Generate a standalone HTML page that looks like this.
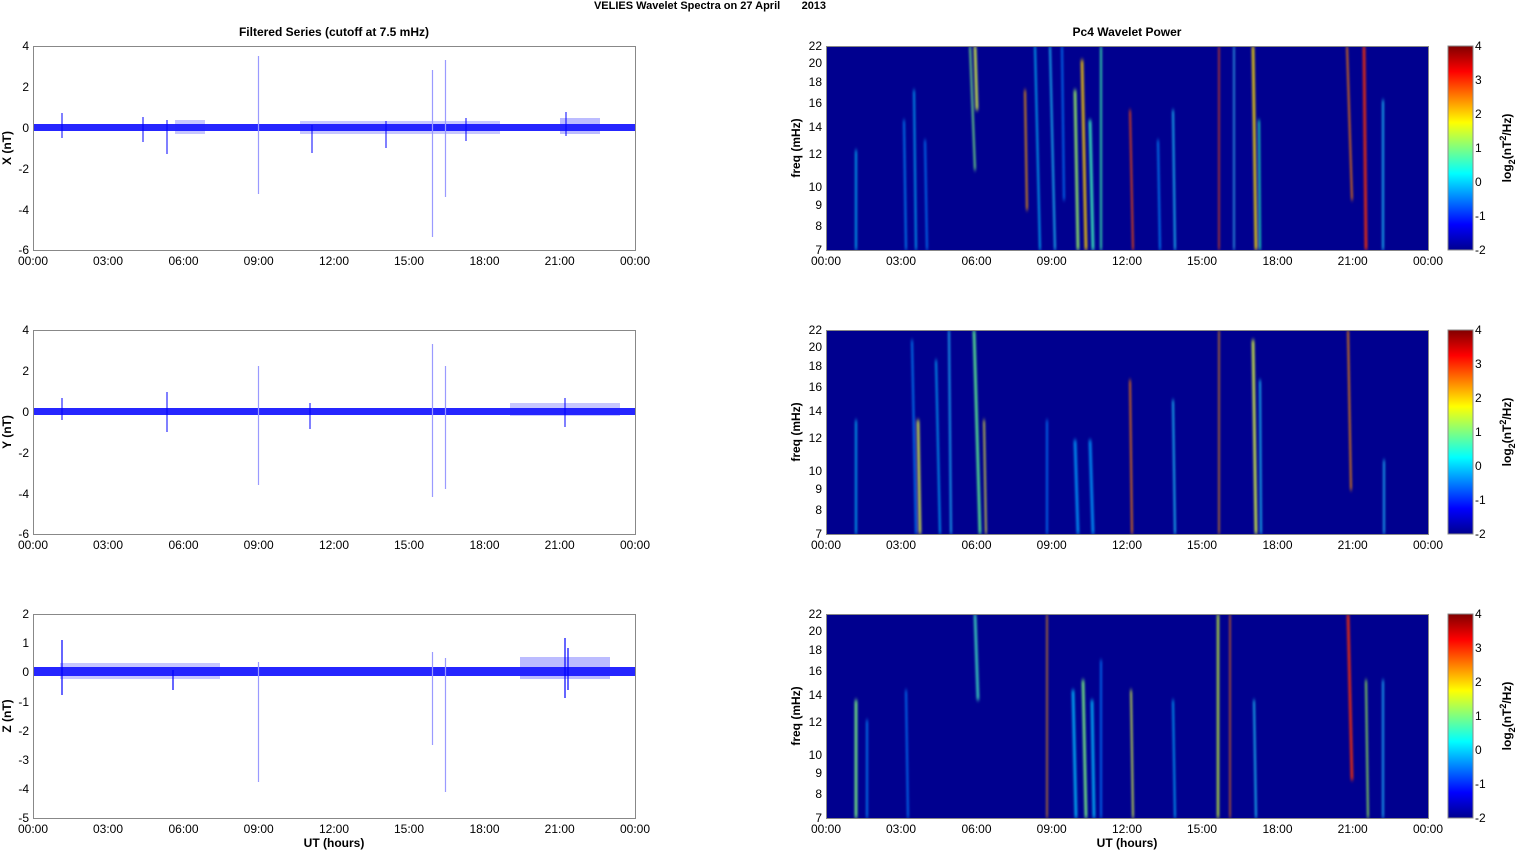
<!DOCTYPE html>
<html><head><meta charset="utf-8"><style>
html,body{margin:0;padding:0;background:#fff;}
svg{display:block;font-family:"Liberation Sans",Arial,sans-serif;}
.t{font-size:12px;fill:#000}
.b{font-size:12px;font-weight:bold;fill:#000}
</style></head><body>
<svg width="1515" height="851" viewBox="0 0 1515 851" xmlns="http://www.w3.org/2000/svg">
<defs>
<linearGradient id="jet" x1="0" y1="1" x2="0" y2="0">
<stop offset="0" stop-color="#00008f"/><stop offset="0.125" stop-color="#0000ff"/>
<stop offset="0.375" stop-color="#00ffff"/><stop offset="0.625" stop-color="#ffff00"/>
<stop offset="0.875" stop-color="#ff0000"/><stop offset="1" stop-color="#800000"/></linearGradient>
<filter id="bl" x="-1" y="-0.1" width="3" height="1.2"><feGaussianBlur stdDeviation="1 2"/></filter>
<clipPath id="c1"><rect x="826" y="46" width="602" height="204"/></clipPath>
<clipPath id="c2"><rect x="826" y="330" width="602" height="204"/></clipPath>
<clipPath id="c3"><rect x="826" y="614" width="602" height="204"/></clipPath>
</defs>
<text x="710" y="9" text-anchor="middle" style="font-size:11px;font-weight:bold">VELIES Wavelet Spectra on 27 April&#160;&#160;&#160;&#160;&#160;&#160;&#160;2013</text>
<text x="334" y="36" text-anchor="middle" class="b">Filtered Series (cutoff at 7.5 mHz)</text>
<text x="1127" y="36" text-anchor="middle" class="b">Pc4 Wavelet Power</text>

<g stroke="#888" fill="none"><rect x="33.5" y="46.5" width="602" height="204"/><rect x="33.5" y="330.5" width="602" height="204"/><rect x="33.5" y="614.5" width="602" height="204"/></g>
<g>
<rect x="34" y="124" width="601" height="7" fill="#0000ff" opacity="0.85"/>
<rect x="300" y="121" width="200" height="13" fill="#2020ff" opacity="0.25"/>
<rect x="560" y="118" width="40" height="16" fill="#2020ff" opacity="0.3"/>
<rect x="175" y="120" width="30" height="14" fill="#2020ff" opacity="0.25"/>
<g stroke="#9a9aff" stroke-width="1.2"><line x1="258.5" y1="56" x2="258.5" y2="194"/><line x1="432.5" y1="70" x2="432.5" y2="237"/><line x1="445.5" y1="60" x2="445.5" y2="197"/></g>
<g stroke="#0000ff" stroke-width="1"><line x1="62" y1="113" x2="62" y2="138"/><line x1="167" y1="120" x2="167" y2="154"/><line x1="143" y1="117" x2="143" y2="142"/><line x1="312" y1="125" x2="312" y2="153"/><line x1="386" y1="121" x2="386" y2="148"/><line x1="466" y1="118" x2="466" y2="141"/><line x1="566" y1="112" x2="566" y2="136"/></g>
</g>
<g>
<rect x="34" y="408" width="601" height="7" fill="#0000ff" opacity="0.85"/>
<rect x="510" y="403" width="110" height="13" fill="#2020ff" opacity="0.25"/>
<g stroke="#9a9aff" stroke-width="1.2"><line x1="258.5" y1="366" x2="258.5" y2="485"/><line x1="432.5" y1="344" x2="432.5" y2="497"/><line x1="445.5" y1="366" x2="445.5" y2="489"/></g>
<g stroke="#0000ff" stroke-width="1"><line x1="62" y1="398" x2="62" y2="420"/><line x1="167" y1="392" x2="167" y2="432"/><line x1="310" y1="403" x2="310" y2="429"/><line x1="565" y1="398" x2="565" y2="427"/></g>
</g>
<g>
<rect x="34" y="667" width="601" height="9" fill="#0000ff" opacity="0.85"/>
<rect x="60" y="663" width="160" height="16" fill="#2020ff" opacity="0.25"/>
<rect x="520" y="657" width="90" height="22" fill="#2020ff" opacity="0.3"/>
<g stroke="#9a9aff" stroke-width="1.2"><line x1="258.5" y1="662" x2="258.5" y2="782"/><line x1="432.5" y1="652" x2="432.5" y2="745"/><line x1="445.5" y1="658" x2="445.5" y2="792"/></g>
<g stroke="#0000ff" stroke-width="1.2"><line x1="62" y1="640" x2="62" y2="695"/><line x1="565" y1="638" x2="565" y2="698"/><line x1="568" y1="648" x2="568" y2="690"/><line x1="173" y1="670" x2="173" y2="690"/></g>
</g>

<g class="t" text-anchor="end">
<text x="29" y="50">4</text><text x="29" y="91">2</text><text x="29" y="132">0</text><text x="29" y="173">-2</text><text x="29" y="214">-4</text><text x="29" y="254">-6</text>
<text x="29" y="334">4</text><text x="29" y="375">2</text><text x="29" y="416">0</text><text x="29" y="457">-2</text><text x="29" y="498">-4</text><text x="29" y="538">-6</text>
<text x="29" y="618">2</text><text x="29" y="647">1</text><text x="29" y="676">0</text><text x="29" y="706">-1</text><text x="29" y="735">-2</text><text x="29" y="764">-3</text><text x="29" y="793">-4</text><text x="29" y="822">-5</text>
</g>
<g class="b"><text transform="translate(11,148) rotate(-90)" text-anchor="middle">X (nT)</text><text transform="translate(11,432) rotate(-90)" text-anchor="middle">Y (nT)</text><text transform="translate(11,716) rotate(-90)" text-anchor="middle">Z (nT)</text></g>

<g class="t" text-anchor="middle">
<g id="xl1"><text x="33" y="265">00:00</text><text x="108" y="265">03:00</text><text x="183.5" y="265">06:00</text><text x="258.7" y="265">09:00</text><text x="334" y="265">12:00</text><text x="409" y="265">15:00</text><text x="484.5" y="265">18:00</text><text x="559.7" y="265">21:00</text><text x="635" y="265">00:00</text></g>
<g transform="translate(0,284)"><text x="33" y="265">00:00</text><text x="108" y="265">03:00</text><text x="183.5" y="265">06:00</text><text x="258.7" y="265">09:00</text><text x="334" y="265">12:00</text><text x="409" y="265">15:00</text><text x="484.5" y="265">18:00</text><text x="559.7" y="265">21:00</text><text x="635" y="265">00:00</text></g>
<g transform="translate(0,568)"><text x="33" y="265">00:00</text><text x="108" y="265">03:00</text><text x="183.5" y="265">06:00</text><text x="258.7" y="265">09:00</text><text x="334" y="265">12:00</text><text x="409" y="265">15:00</text><text x="484.5" y="265">18:00</text><text x="559.7" y="265">21:00</text><text x="635" y="265">00:00</text></g>
<g transform="translate(793,0)"><text x="33" y="265">00:00</text><text x="108" y="265">03:00</text><text x="183.5" y="265">06:00</text><text x="258.7" y="265">09:00</text><text x="334" y="265">12:00</text><text x="409" y="265">15:00</text><text x="484.5" y="265">18:00</text><text x="559.7" y="265">21:00</text><text x="635" y="265">00:00</text></g>
<g transform="translate(793,284)"><text x="33" y="265">00:00</text><text x="108" y="265">03:00</text><text x="183.5" y="265">06:00</text><text x="258.7" y="265">09:00</text><text x="334" y="265">12:00</text><text x="409" y="265">15:00</text><text x="484.5" y="265">18:00</text><text x="559.7" y="265">21:00</text><text x="635" y="265">00:00</text></g>
<g transform="translate(793,568)"><text x="33" y="265">00:00</text><text x="108" y="265">03:00</text><text x="183.5" y="265">06:00</text><text x="258.7" y="265">09:00</text><text x="334" y="265">12:00</text><text x="409" y="265">15:00</text><text x="484.5" y="265">18:00</text><text x="559.7" y="265">21:00</text><text x="635" y="265">00:00</text></g>
</g>
<text x="334" y="847" text-anchor="middle" class="b">UT (hours)</text>
<text x="1127" y="847" text-anchor="middle" class="b">UT (hours)</text>

<rect x="826" y="46" width="602" height="204" fill="#00008f"/>
<rect x="826" y="330" width="602" height="204" fill="#00008f"/>
<rect x="826" y="614" width="602" height="204" fill="#00008f"/>

<g clip-path="url(#c1)" opacity="0.8">
<g filter="url(#bl)" stroke-width="2">
<line x1="856" y1="150" x2="856" y2="250" stroke="#00c0ff"/>
<line x1="904" y1="120" x2="906" y2="250" stroke="#0090ff"/>
<line x1="914" y1="90" x2="916" y2="250" stroke="#00b0ff"/>
<line x1="925" y1="140" x2="927" y2="250" stroke="#0080ff"/>
<line x1="970" y1="46" x2="975" y2="170" stroke="#80ff80"/>
<line x1="975" y1="46" x2="977" y2="110" stroke="#e0ff40" stroke-width="3"/>
<line x1="1025" y1="90" x2="1027" y2="210" stroke="#ffa000"/>
<line x1="1035" y1="46" x2="1040" y2="250" stroke="#00c0ff"/>
<line x1="1050" y1="46" x2="1055" y2="250" stroke="#20d0ff"/>
<line x1="1062" y1="46" x2="1064" y2="200" stroke="#0080ff"/>
<line x1="1075" y1="90" x2="1078" y2="250" stroke="#a0ff60" stroke-width="3"/>
<line x1="1082" y1="60" x2="1086" y2="250" stroke="#ffd000" stroke-width="3"/>
<line x1="1090" y1="120" x2="1093" y2="250" stroke="#40ffc0" stroke-width="3"/>
<line x1="1101" y1="46" x2="1101" y2="250" stroke="#40ffb0"/>
<line x1="1130" y1="110" x2="1133" y2="250" stroke="#ff5000"/>
<line x1="1158" y1="140" x2="1160" y2="250" stroke="#0090ff"/>
<line x1="1173" y1="110" x2="1175" y2="250" stroke="#20d0ff"/>
<line x1="1219" y1="46" x2="1219" y2="250" stroke="#ff5000" stroke-width="1.5"/>
<line x1="1234" y1="46" x2="1234" y2="250" stroke="#40d0ff" stroke-width="1.5"/>
<line x1="1253" y1="46" x2="1256" y2="250" stroke="#ffe000" stroke-width="3"/>
<line x1="1259" y1="120" x2="1260" y2="250" stroke="#20ffc0"/>
<line x1="1347" y1="46" x2="1352" y2="200" stroke="#ff8000"/>
<line x1="1364" y1="46" x2="1366" y2="250" stroke="#ff3000" stroke-width="3"/>
<line x1="1383" y1="100" x2="1383" y2="250" stroke="#20d0ff"/>
</g></g>

<g clip-path="url(#c2)" opacity="0.8">
<g filter="url(#bl)" stroke-width="2">
<line x1="856" y1="420" x2="856" y2="534" stroke="#00c0ff"/>
<line x1="912" y1="340" x2="916" y2="534" stroke="#0090ff"/>
<line x1="918" y1="420" x2="920" y2="534" stroke="#e0f040" stroke-width="3"/>
<line x1="936" y1="360" x2="940" y2="534" stroke="#00b0ff"/>
<line x1="949" y1="330" x2="951" y2="534" stroke="#20c0ff"/>
<line x1="974" y1="330" x2="980" y2="534" stroke="#60ff90" stroke-width="3"/>
<line x1="984" y1="420" x2="986" y2="534" stroke="#e0e040"/>
<line x1="1047" y1="420" x2="1047" y2="534" stroke="#0080ff"/>
<line x1="1075" y1="440" x2="1078" y2="534" stroke="#00a0ff" stroke-width="3"/>
<line x1="1090" y1="440" x2="1093" y2="534" stroke="#00a0ff" stroke-width="3"/>
<line x1="1130" y1="380" x2="1132" y2="534" stroke="#ff8000"/>
<line x1="1173" y1="400" x2="1175" y2="534" stroke="#20d0ff"/>
<line x1="1219" y1="330" x2="1219" y2="534" stroke="#ffa000" stroke-width="1.5"/>
<line x1="1253" y1="340" x2="1256" y2="534" stroke="#e0ff40" stroke-width="3"/>
<line x1="1260" y1="380" x2="1261" y2="534" stroke="#20d0ff"/>
<line x1="1348" y1="330" x2="1351" y2="490" stroke="#ff9000"/>
<line x1="1384" y1="460" x2="1384" y2="534" stroke="#20c0ff"/>
</g></g>

<g clip-path="url(#c3)" opacity="0.8">
<g filter="url(#bl)" stroke-width="2">
<line x1="856" y1="700" x2="856" y2="818" stroke="#80ff80" stroke-width="3"/>
<line x1="867" y1="720" x2="867" y2="818" stroke="#0090ff"/>
<line x1="906" y1="690" x2="908" y2="818" stroke="#0080ff"/>
<line x1="975" y1="614" x2="978" y2="700" stroke="#40e0c0" stroke-width="3"/>
<line x1="1047" y1="614" x2="1047" y2="818" stroke="#ffa000" stroke-width="1.5"/>
<line x1="1073" y1="690" x2="1076" y2="818" stroke="#00c0ff" stroke-width="3"/>
<line x1="1083" y1="680" x2="1086" y2="818" stroke="#80ff80" stroke-width="3"/>
<line x1="1092" y1="700" x2="1094" y2="818" stroke="#00c0ff" stroke-width="3"/>
<line x1="1101" y1="660" x2="1101" y2="818" stroke="#0080ff"/>
<line x1="1131" y1="690" x2="1133" y2="818" stroke="#e0ff40"/>
<line x1="1173" y1="700" x2="1175" y2="818" stroke="#00b0ff"/>
<line x1="1218" y1="614" x2="1218" y2="818" stroke="#d0ff30" stroke-width="2.5"/>
<line x1="1230" y1="614" x2="1230" y2="818" stroke="#ff8000" stroke-width="1.5"/>
<line x1="1254" y1="700" x2="1256" y2="818" stroke="#20d0ff"/>
<line x1="1348" y1="614" x2="1352" y2="780" stroke="#ff3000" stroke-width="3"/>
<line x1="1366" y1="680" x2="1368" y2="818" stroke="#a0ff50"/>
<line x1="1383" y1="680" x2="1383" y2="818" stroke="#20c0ff"/>
</g></g>

<g stroke="#888" fill="none"><rect x="826.5" y="46.5" width="602" height="204"/><rect x="826.5" y="330.5" width="602" height="204"/><rect x="826.5" y="614.5" width="602" height="204"/></g>

<g class="t" text-anchor="end" id="fl">
<text x="822" y="50">22</text><text x="822" y="67">20</text><text x="822" y="86">18</text><text x="822" y="107">16</text><text x="822" y="131">14</text><text x="822" y="158">12</text><text x="822" y="191">10</text><text x="822" y="209">9</text><text x="822" y="230">8</text><text x="822" y="254">7</text>
</g>
<use href="#fl" y="284"/><use href="#fl" y="568"/>
<g class="b"><text transform="translate(800,148) rotate(-90)" text-anchor="middle">freq (mHz)</text><text transform="translate(800,432) rotate(-90)" text-anchor="middle">freq (mHz)</text><text transform="translate(800,716) rotate(-90)" text-anchor="middle">freq (mHz)</text></g>

<g id="cb">
<rect x="1448" y="46" width="25" height="204" fill="url(#jet)" stroke="#888"/>
<g class="t"><text x="1475" y="50">4</text><text x="1475" y="84">3</text><text x="1475" y="118">2</text><text x="1475" y="152">1</text><text x="1475" y="186">0</text><text x="1475" y="220">-1</text><text x="1475" y="254">-2</text></g>
<text transform="translate(1511,148) rotate(-90)" text-anchor="middle" class="b">log<tspan dy="4" style="font-size:9px">2</tspan><tspan dy="-4">(nT</tspan><tspan dy="-5" style="font-size:9px">2</tspan><tspan dy="5">/Hz)</tspan></text>
</g>
<use href="#cb" y="284"/><use href="#cb" y="568"/>
</svg>
</body></html>
